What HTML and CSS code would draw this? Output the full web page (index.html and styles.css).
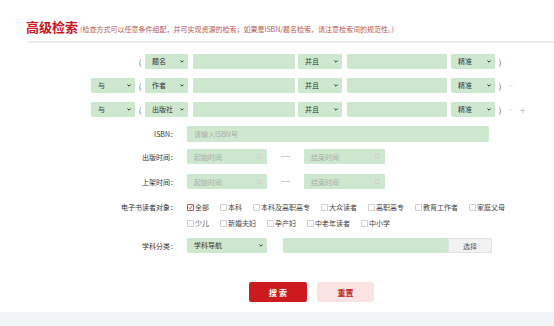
FILE: index.html
```html
<!DOCTYPE html>
<html lang="zh-CN">
<head>
<meta charset="utf-8">
<title>高级检索</title>
<link rel="stylesheet" href="styles.css">
</head>
<body>
<header class="head">
  <h1 class="title">高级检索</h1>
  <span class="tip">(检查方式可以任意条件组配，并可实现资源的检索；如果是ISBN/题名检索，请注意检索词的规范性。)</span>
</header>
<div class="rule"></div>

<form class="form">
  <div class="cond-row first">
    <div class="sel logic hidden"><span>与</span><svg class="chev" viewBox="0 0 6 4"><path d="M0.6 0.6 L3 3 L5.4 0.6"/></svg></div>
    <span class="paren open">(</span>
    <div class="sel field"><span>题名</span><svg class="chev" viewBox="0 0 6 4"><path d="M0.6 0.6 L3 3 L5.4 0.6"/></svg></div>
    <div class="inp kw"></div>
    <div class="sel op"><span>并且</span><svg class="chev" viewBox="0 0 6 4"><path d="M0.6 0.6 L3 3 L5.4 0.6"/></svg></div>
    <div class="inp kw2"></div>
    <div class="sel mode"><span>精准</span><svg class="chev" viewBox="0 0 6 4"><path d="M0.6 0.6 L3 3 L5.4 0.6"/></svg></div>
    <span class="paren close">)</span>
  </div>
  <div class="cond-row">
    <div class="sel logic"><span>与</span><svg class="chev" viewBox="0 0 6 4"><path d="M0.6 0.6 L3 3 L5.4 0.6"/></svg></div>
    <span class="paren open">(</span>
    <div class="sel field"><span>作者</span><svg class="chev" viewBox="0 0 6 4"><path d="M0.6 0.6 L3 3 L5.4 0.6"/></svg></div>
    <div class="inp kw"></div>
    <div class="sel op"><span>并且</span><svg class="chev" viewBox="0 0 6 4"><path d="M0.6 0.6 L3 3 L5.4 0.6"/></svg></div>
    <div class="inp kw2"></div>
    <div class="sel mode"><span>精准</span><svg class="chev" viewBox="0 0 6 4"><path d="M0.6 0.6 L3 3 L5.4 0.6"/></svg></div>
    <span class="paren close">)</span>
    <span class="pm minus">−</span>
  </div>
  <div class="cond-row">
    <div class="sel logic"><span>与</span><svg class="chev" viewBox="0 0 6 4"><path d="M0.6 0.6 L3 3 L5.4 0.6"/></svg></div>
    <span class="paren open">(</span>
    <div class="sel field"><span>出版社</span><svg class="chev" viewBox="0 0 6 4"><path d="M0.6 0.6 L3 3 L5.4 0.6"/></svg></div>
    <div class="inp kw"></div>
    <div class="sel op"><span>并且</span><svg class="chev" viewBox="0 0 6 4"><path d="M0.6 0.6 L3 3 L5.4 0.6"/></svg></div>
    <div class="inp kw2"></div>
    <div class="sel mode"><span>精准</span><svg class="chev" viewBox="0 0 6 4"><path d="M0.6 0.6 L3 3 L5.4 0.6"/></svg></div>
    <span class="paren close">)</span>
    <span class="pm minus">−</span>
    <span class="pm plus">+</span>
  </div>

  <div class="field-row isbn-row">
    <label class="lbl">ISBN：</label>
    <div class="inp isbn ph">请输入ISBN号</div>
  </div>

  <div class="field-row date-row d1">
    <label class="lbl">出版时间：</label>
    <div class="inp date ph">起始时间<span class="cal"></span></div>
    <span class="dash"><i></i></span>
    <div class="inp date ph">结束时间<span class="cal"></span></div>
  </div>
  <div class="field-row date-row d2">
    <label class="lbl">上架时间：</label>
    <div class="inp date ph">起始时间<span class="cal"></span></div>
    <span class="dash"><i></i></span>
    <div class="inp date ph">结束时间<span class="cal"></span></div>
  </div>

  <div class="field-row reader-row">
    <label class="lbl">电子书读者对象：</label>
    <div class="checks">
      <span class="ck on"><i class="box"><svg viewBox="0 0 8 8"><path d="M1.5 4 L3.3 6 L6.8 1"/></svg></i>全部</span>
      <span class="ck"><i class="box"></i>本科</span>
      <span class="ck"><i class="box"></i>本科及高职高专</span>
      <span class="ck"><i class="box"></i>大众读者</span>
      <span class="ck"><i class="box"></i>高职高专</span>
      <span class="ck"><i class="box"></i>教育工作者</span>
      <span class="ck"><i class="box"></i>家庭父母</span>
      <span class="ck"><i class="box"></i>少儿</span>
      <span class="ck"><i class="box"></i>新婚夫妇</span>
      <span class="ck"><i class="box"></i>孕产妇</span>
      <span class="ck"><i class="box"></i>中老年读者</span>
      <span class="ck"><i class="box"></i>中小学</span>
    </div>
  </div>

  <div class="field-row subj-row">
    <label class="lbl">学科分类：</label>
    <div class="sel subj"><span>学科导航</span><svg class="chev" viewBox="0 0 6 4"><path d="M0.6 0.6 L3 3 L5.4 0.6"/></svg></div>
    <div class="inp subj-inp"></div>
    <button type="button" class="pick">选择</button>
  </div>
</form>

<div class="actions">
  <button type="button" class="btn search">搜 索</button>
  <button type="button" class="btn reset">重置</button>
</div>

<footer class="foot"></footer>
</body>
</html>
```

FILE: styles.css
```css
* { box-sizing: border-box; }
html, body { margin: 0; padding: 0; background: #fff; }
body {
  font-family: "Noto Sans CJK SC", "Noto Sans", sans-serif;
  color: #333;
  font-size: 7px;
  width: 554px;
  height: 326px;
  overflow: hidden;
}

.head {
  display: flex;
  align-items: baseline;
  padding: 19px 0 0 26px;
  height: 41px;
}
.title {
  margin: 0;
  font-size: 13px;
  font-weight: 700;
  color: #c9161d;
  line-height: 16px;
}
.tip {
  margin-left: 2px;
  font-size: 7px;
  color: #b9574c;
  line-height: 10px;
}
.rule {
  margin-left: 28px;
  height: 2px;
  background: #ebebeb;
}

.form { padding-top: 11px; }

.cond-row {
  display: flex;
  align-items: center;
  height: 15px;
  padding-left: 91px;
  margin-bottom: 9px;
}

.sel {
  display: flex;
  align-items: center;
  justify-content: space-between;
  height: 15px;
  background: #cde8cf;
  border-radius: 1px;
  padding: 0 4px 0 7px;
  color: #333;
  font-size: 7px;
  line-height: 1;
}
.sel .chev {
  width: 4px;
  height: 3px;
  fill: none;
  stroke: #333;
  stroke-width: 1.5;
}
.hidden { visibility: hidden; }
.logic { width: 44px; }
.field { width: 43px; }
.op { width: 44px; margin-left: 3px; }
.mode { width: 44px; margin-left: 4px; }

.paren {
  width: 10px;
  text-align: center;
  font-size: 8px;
  color: #666;
}

.inp {
  height: 15px;
  background: #cde8cf;
  border-radius: 1px;
}
.kw { width: 102px; margin-left: 5px; }
.kw2 { width: 100px; margin-left: 5px; }

.pm {
  font-size: 7px;
  color: #c4c4c4;
  line-height: 1;
}
.minus { margin-left: 4px; }
.plus { margin-left: 7px; font-size: 10px; }

.field-row {
  display: flex;
  align-items: center;
}
.lbl {
  width: 177px;
  text-align: right;
  margin-right: 10px;
  color: #333;
  font-size: 7px;
  flex: none;
}
.ph {
  color: #aaa;
  font-size: 7px;
  display: flex;
  align-items: center;
  padding-left: 7px;
}

.isbn-row { height: 16px; }
.isbn { width: 302px; height: 16px; }

.date-row { height: 15px; }
.d1 { margin-top: 7px; }
.d2 { margin-top: 10px; }
.date {
  width: 80px;
  justify-content: space-between;
  padding-right: 5px;
}
.date + .dash + .date { width: 81px; }
.cal {
  width: 5px;
  height: 5px;
  background: #dcdcdc;
  border: 1px solid #c8d8c9;
  border-radius: 1px;
}
.dash {
  width: 37px;
  display: flex;
  justify-content: center;
}
.dash i {
  display: block;
  width: 9px;
  height: 1px;
  background: #c8c8c8;
}

.reader-row {
  align-items: flex-start;
  margin-top: 10px;
}
.reader-row .lbl { line-height: 16px; }
.checks {
  width: 330px;
  display: flex;
  flex-wrap: wrap;
  column-gap: 11px;
}
.ck {
  display: flex;
  align-items: center;
  height: 16px;
  color: #444;
  font-size: 7px;
}
.box {
  width: 7px;
  height: 7px;
  border: 1px solid #cfcfcf;
  border-radius: 1px;
  margin-right: 1px;
  display: flex;
  align-items: center;
  justify-content: center;
  background: #fff;
}
.ck.on .box { border-color: #e0454a; }
.box svg {
  width: 7px;
  height: 7px;
  fill: none;
  stroke: #d4262c;
  stroke-width: 1.3;
}

.subj-row { margin-top: 7px; height: 15px; }
.subj { width: 80px; }
.subj-inp { width: 165px; margin-left: 16px; }
.pick {
  width: 44px;
  height: 15px;
  margin: 0;
  padding: 0;
  border: 1px solid #e2e2e2;
  background: #f2f2f2;
  color: #555;
  font-family: inherit;
  font-size: 7px;
  border-radius: 0 1px 1px 0;
}

.actions {
  display: flex;
  gap: 10px;
  padding-left: 249px;
  margin-top: 29px;
}
.btn {
  height: 20px;
  margin: 0;
  padding: 0;
  border: none;
  border-radius: 2px;
  font-family: inherit;
  font-size: 8px;
  font-weight: 700;
}
.search { width: 58px; background: #cc1a1f; color: #fff; }
.reset { width: 57px; background: #fbe3e4; color: #c5282e; }

.foot {
  margin-top: 10px;
  height: 20px;
  background: #f2f3f5;
}
```
